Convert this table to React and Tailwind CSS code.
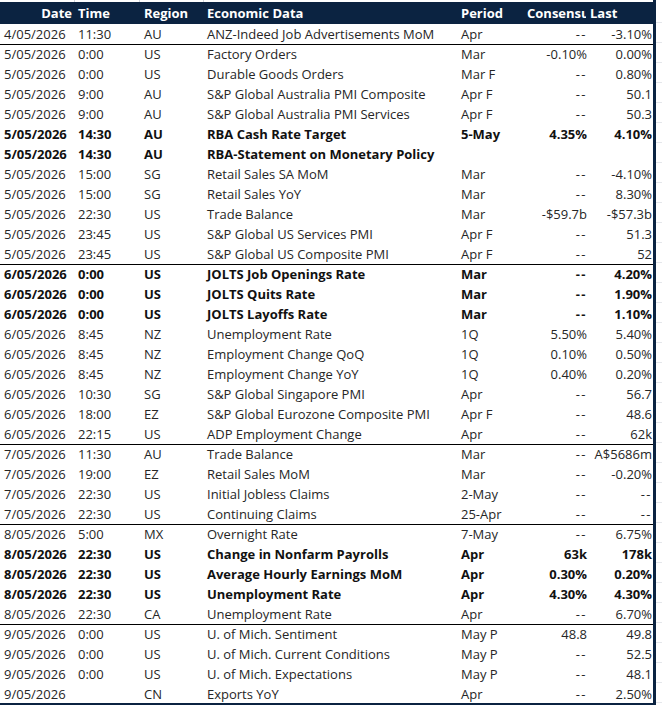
import React from 'react';

const rows = [
    ['4/05/2026', '11:30', 'AU', 'ANZ-Indeed Job Advertisements MoM', 'Apr', '--', '-3.10%'],
    ['5/05/2026', '0:00', 'US', 'Factory Orders', 'Mar', '-0.10%', '0.00%', false, true],
    ['5/05/2026', '0:00', 'US', 'Durable Goods Orders', 'Mar F', '--', '0.80%'],
    ['5/05/2026', '9:00', 'AU', 'S&P Global Australia PMI Composite', 'Apr F', '--', '50.1'],
    ['5/05/2026', '9:00', 'AU', 'S&P Global Australia PMI Services', 'Apr F', '--', '50.3'],
    ['5/05/2026', '14:30', 'AU', 'RBA Cash Rate Target', '5-May', '4.35%', '4.10%', true],
    ['5/05/2026', '14:30', 'AU', 'RBA-Statement on Monetary Policy', '', '', '', true],
    ['5/05/2026', '15:00', 'SG', 'Retail Sales SA MoM', 'Mar', '--', '-4.10%'],
    ['5/05/2026', '15:00', 'SG', 'Retail Sales YoY', 'Mar', '--', '8.30%'],
    ['5/05/2026', '22:30', 'US', 'Trade Balance', 'Mar', '-$59.7b', '-$57.3b'],
    ['5/05/2026', '23:45', 'US', 'S&P Global US Services PMI', 'Apr F', '--', '51.3'],
    ['5/05/2026', '23:45', 'US', 'S&P Global US Composite PMI', 'Apr F', '--', '52'],
    ['6/05/2026', '0:00', 'US', 'JOLTS Job Openings Rate', 'Mar', '--', '4.20%', true, true],
    ['6/05/2026', '0:00', 'US', 'JOLTS Quits Rate', 'Mar', '--', '1.90%', true],
    ['6/05/2026', '0:00', 'US', 'JOLTS Layoffs Rate', 'Mar', '--', '1.10%', true],
    ['6/05/2026', '8:45', 'NZ', 'Unemployment Rate', '1Q', '5.50%', '5.40%'],
    ['6/05/2026', '8:45', 'NZ', 'Employment Change QoQ', '1Q', '0.10%', '0.50%'],
    ['6/05/2026', '8:45', 'NZ', 'Employment Change YoY', '1Q', '0.40%', '0.20%'],
    ['6/05/2026', '10:30', 'SG', 'S&P Global Singapore PMI', 'Apr', '--', '56.7'],
    ['6/05/2026', '18:00', 'EZ', 'S&P Global Eurozone Composite PMI', 'Apr F', '--', '48.6'],
    ['6/05/2026', '22:15', 'US', 'ADP Employment Change', 'Apr', '--', '62k'],
    ['7/05/2026', '11:30', 'AU', 'Trade Balance', 'Mar', '--', 'A$5686m', false, true],
    ['7/05/2026', '19:00', 'EZ', 'Retail Sales MoM', 'Mar', '--', '-0.20%'],
    ['7/05/2026', '22:30', 'US', 'Initial Jobless Claims', '2-May', '--', '--'],
    ['7/05/2026', '22:30', 'US', 'Continuing Claims', '25-Apr', '--', '--'],
    ['8/05/2026', '5:00', 'MX', 'Overnight Rate', '7-May', '--', '6.75%', false, true],
    ['8/05/2026', '22:30', 'US', 'Change in Nonfarm Payrolls', 'Apr', '63k', '178k', true],
    ['8/05/2026', '22:30', 'US', 'Average Hourly Earnings MoM', 'Apr', '0.30%', '0.20%', true],
    ['8/05/2026', '22:30', 'US', 'Unemployment Rate', 'Apr', '4.30%', '4.30%', true],
    ['8/05/2026', '22:30', 'CA', 'Unemployment Rate', 'Apr', '--', '6.70%'],
    ['9/05/2026', '0:00', 'US', 'U. of Mich. Sentiment', 'May P', '48.8', '49.8', false, true],
    ['9/05/2026', '0:00', 'US', 'U. of Mich. Current Conditions', 'May P', '--', '52.5'],
    ['9/05/2026', '0:00', 'US', 'U. of Mich. Expectations', 'May P', '--', '48.1'],
    ['9/05/2026', '', 'CN', 'Exports YoY', 'Apr', '--', '2.50%'],
];

const cols = 'grid grid-cols-[75px_65px_64px_253px_67px_64px_65px]';

// dashes read a touch wider in the sheet font
const Num = ({ v }) => (
    <div className="text-right pr-[1px]">
        {v === '--' ? <span className="tracking-[1.5px]">--</span> : v}
    </div>
);

const App = () => {
    return (
        <div className="flex w-[662px] h-[705px] bg-white overflow-hidden text-[13px] leading-5" style={{ fontFamily: '"Open Sans", sans-serif' }}>
            <div className="w-[656px] flex flex-col border-r-[3px] border-b-2 border-[#0b2341]">
                {/* sheet gridline strip above the header */}
                <div className={`${cols} h-[2px] shrink-0`}>
                    <div className="border-r border-gray-300" />
                    <div className="border-r border-gray-300" />
                    <div className="border-r border-gray-300" />
                    <div />
                </div>

                {/* Header */}
                <div className={`${cols} h-[22px] shrink-0 bg-[#0b2341] text-white font-bold leading-[22px]`}>
                    <div className="text-right pr-[3px]">Date</div>
                    <div className="pl-[3px]">Time</div>
                    <div className="pl-[4px]">Region</div>
                    <div className="pl-[3px]">Economic Data</div>
                    <div className="pl-[4px]">Period</div>
                    <div className="pl-[3px]">
                        <div className="w-[59px] whitespace-nowrap overflow-hidden">Consensus</div>
                    </div>
                    <div className="pl-[2px]">Last</div>
                </div>

                {/* Rows */}
                {rows.map((r, i) => {
                    const [date, time, region, event, period, cons, last, bold, sep] = r;
                    return (
                        <div
                            key={i}
                            className={`${cols} h-5 shrink-0 box-border whitespace-nowrap ${bold ? 'font-bold text-[#111]' : 'text-[#262626]'} ${sep ? 'border-t border-black leading-[19px]' : ''}`}
                        >
                            <div className="pl-[4px]">{date}</div>
                            <div className="pl-[3px]">{time}</div>
                            <div className="pl-[4px]">{region}</div>
                            <div className="pl-[3px]">{event}</div>
                            <div className="pl-[4px]">{period}</div>
                            <Num v={cons} />
                            <Num v={last} />
                        </div>
                    );
                })}
            </div>

            {/* Sheet gutter to the right */}
            <div className="flex-1 flex flex-col">
                <div className="h-[23px] shrink-0 border-b border-gray-200" />
                {rows.map((_, i) => (
                    <div key={i} className="h-5 shrink-0 border-b border-gray-200" />
                ))}
            </div>
        </div>
    );
};

export default App;
